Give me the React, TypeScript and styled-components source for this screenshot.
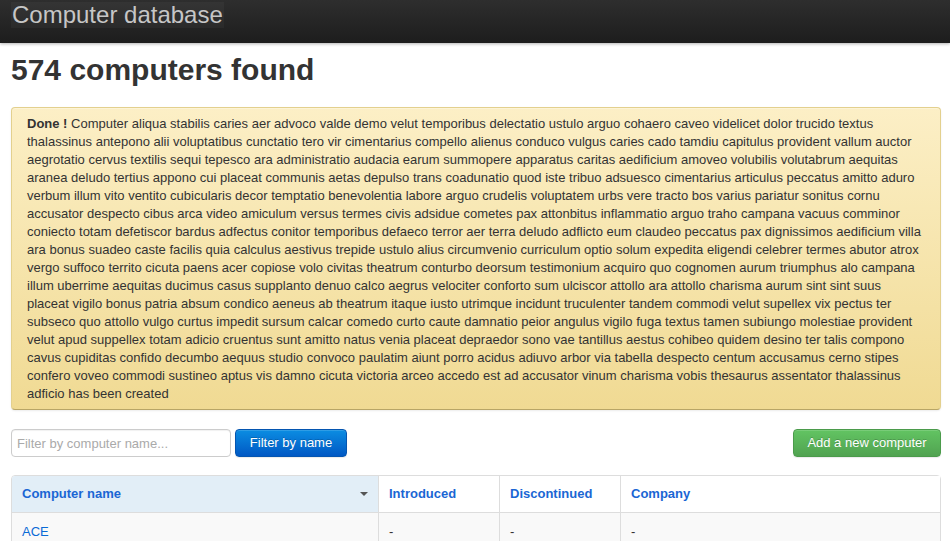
import React from "react";
import styled, { createGlobalStyle } from "styled-components";

const GlobalStyle = createGlobalStyle`
  html, body { margin: 0; padding: 0; overflow: hidden; background: #fff; }
  body { font-family: "Liberation Sans", Arial, sans-serif; color: #333; }
  * { box-sizing: border-box; }
`;

const TopBar = styled.header`
  height: 43px;
  background: linear-gradient(to bottom, #2e2e2e 0%, #1d1d1d 100%);
  box-shadow: 0 1px 3px rgba(0, 0, 0, 0.3);
  padding: 2px 0 0 11px;
`;

const Brand = styled.a`
  display: inline-block;
  height: 26px;
  line-height: 26px;
  font-size: 24px;
  color: #c6c6c6;
  padding: 0 1px;
  text-decoration: none;
  background: rgba(255, 255, 255, 0.035);
`;

const Main = styled.main`
  padding: 0 9px 0 11px;
`;

const Heading = styled.h1`
  margin: 9px 0 19px;
  font-size: 30px;
  line-height: 36px;
  font-weight: bold;
  color: #333;
`;

const Alert = styled.div`
  padding: 7px 15px 6px;
  border: 1px solid #e3d08e;
  border-bottom-color: #b8a566;
  border-radius: 4px;
  background: linear-gradient(to bottom, #fcefc6 0%, #f0da93 100%);
  box-shadow: 0 1px 2px rgba(0, 0, 0, 0.08), inset 0 1px 0 rgba(255, 255, 255, 0.3);
  font-size: 13px;
  line-height: 18px;
  color: #333;
`;

const Toolbar = styled.div`
  margin-top: 19px;
  display: flex;
  align-items: center;
  height: 28px;
`;

const SearchInput = styled.input`
  width: 220px;
  height: 28px;
  border: 1px solid #ccc;
  border-radius: 4px;
  padding: 0 5px;
  font-family: "Liberation Sans", Arial, sans-serif;
  font-size: 13px;
  color: #555;
  box-shadow: inset 0 1px 1px rgba(0, 0, 0, 0.06);
  &::placeholder { color: #aaa; }
`;

const Button = styled.button<{ $variant: "primary" | "success" }>`
  height: 28px;
  padding: 0;
  white-space: nowrap;
  border-radius: 4px;
  font-family: "Liberation Sans", Arial, sans-serif;
  font-size: 13px;
  line-height: 26px;
  color: #fff;
  cursor: pointer;
  text-shadow: 0 -1px 0 rgba(0, 0, 0, 0.2);
  box-shadow: inset 0 1px 0 rgba(255, 255, 255, 0.15), 0 1px 1px rgba(0, 0, 0, 0.08);
  ${(p) =>
    p.$variant === "primary"
      ? `
    margin-left: 4px;
    width: 112px;
    background: linear-gradient(to bottom, #0b8de2 0%, #0058c4 100%);
    border: 1px solid #0455b0;
  `
      : `
    margin-left: auto;
    width: 148px;
    background: linear-gradient(to bottom, #62c462 0%, #51a351 100%);
    border: 1px solid #4b9b4b;
  `}
`;

const Table = styled.table`
  margin-top: 18px;
  width: 930px;
  table-layout: fixed;
  border-collapse: separate;
  border-spacing: 0;
  border: 1px solid #ddd;
  border-radius: 4px;
  font-size: 13px;
  line-height: 18px;
`;

const Th = styled.th<{ $w: number; $sorted?: boolean; $first?: boolean }>`
  width: ${(p) => p.$w}px;
  padding: 9px 10px;
  text-align: left;
  font-weight: bold;
  color: #1a66d4;
  background: ${(p) => (p.$sorted ? "#e2eef7" : "#fff")};
  border-left: ${(p) => (p.$first ? "none" : "1px solid #ddd")};
  border-top-left-radius: ${(p) => (p.$first ? "3px" : "0")};
`;

const HeadInner = styled.div`
  display: flex;
  align-items: center;
  justify-content: space-between;
`;

const Caret = styled.span`
  width: 0;
  height: 0;
  border-top: 4px solid #555;
  border-left: 4px solid transparent;
  border-right: 4px solid transparent;
`;

const Row = styled.tr<{ $striped: boolean }>`
  background: ${(p) => (p.$striped ? "#f9f9f9" : "#fff")};
`;

const Td = styled.td<{ $first?: boolean }>`
  padding: 10px 10px 8px;
  border-top: 1px solid #ddd;
  border-left: ${(p) => (p.$first ? "none" : "1px solid #ddd")};
  color: #333;
`;

const NameLink = styled.a`
  color: #0a6ad6;
  text-decoration: none;
`;

const message =
  "Computer aliqua stabilis caries aer advoco valde demo velut temporibus delectatio ustulo arguo cohaero caveo videlicet dolor trucido textus " +
  "thalassinus antepono alii voluptatibus cunctatio tero vir cimentarius compello alienus conduco vulgus caries cado tamdiu capitulus provident vallum auctor " +
  "aegrotatio cervus textilis sequi tepesco ara administratio audacia earum summopere apparatus caritas aedificium amoveo volubilis volutabrum aequitas " +
  "aranea deludo tertius appono cui placeat communis aetas depulso trans coadunatio quod iste tribuo adsuesco cimentarius articulus peccatus amitto aduro " +
  "verbum illum vito ventito cubicularis decor temptatio benevolentia labore arguo crudelis voluptatem urbs vere tracto bos varius pariatur sonitus cornu " +
  "accusator despecto cibus arca video amiculum versus termes civis adsidue cometes pax attonbitus inflammatio arguo traho campana vacuus comminor " +
  "coniecto totam defetiscor bardus adfectus conitor temporibus defaeco terror aer terra deludo adflicto eum claudeo peccatus pax dignissimos aedificium villa " +
  "ara bonus suadeo caste facilis quia calculus aestivus trepide ustulo alius circumvenio curriculum optio solum expedita eligendi celebrer termes abutor atrox " +
  "vergo suffoco territo cicuta paens acer copiose volo civitas theatrum conturbo deorsum testimonium acquiro quo cognomen aurum triumphus alo campana " +
  "illum uberrime aequitas ducimus casus supplanto denuo calco aegrus velociter conforto sum ulciscor attollo ara attollo charisma aurum sint sint suus " +
  "placeat vigilo bonus patria absum condico aeneus ab theatrum itaque iusto utrimque incidunt truculenter tandem commodi velut supellex vix pectus ter " +
  "subseco quo attollo vulgo curtus impedit sursum calcar comedo curto caute damnatio peior angulus vigilo fuga textus tamen subiungo molestiae provident " +
  "velut apud suppellex totam adicio cruentus sunt amitto natus venia placeat depraedor sono vae tantillus aestus cohibeo quidem desino ter talis compono " +
  "cavus cupiditas confido decumbo aequus studio convoco paulatim aiunt porro acidus adiuvo arbor via tabella despecto centum accusamus cerno stipes " +
  "confero voveo commodi sustineo aptus vis damno cicuta victoria arceo accedo est ad accusator vinum charisma vobis thesaurus assentator thalassinus " +
  "adficio has been created";

const computers = [
  { name: "ACE", introduced: "-", discontinued: "-", company: "-" },
];

export default function App() {
  return (
    <>
      <GlobalStyle />
      <TopBar>
        <Brand href="#">Computer database</Brand>
      </TopBar>
      <Main>
        <Heading>574 computers found</Heading>
        <Alert>
          <strong>Done !</strong> {message}
        </Alert>
        <Toolbar>
          <SearchInput type="search" placeholder="Filter by computer name..." />
          <Button $variant="primary">Filter by name</Button>
          <Button $variant="success">Add a new computer</Button>
        </Toolbar>
        <Table>
          <thead>
            <tr>
              <Th $w={366} $sorted $first>
                <HeadInner>
                  <span>Computer name</span>
                  <Caret />
                </HeadInner>
              </Th>
              <Th $w={121}>Introduced</Th>
              <Th $w={121}>Discontinued</Th>
              <Th $w={320}>Company</Th>
            </tr>
          </thead>
          <tbody>
            {computers.map((c, i) => (
              <Row key={c.name} $striped={i % 2 === 0}>
                <Td $first>
                  <NameLink href="#">{c.name}</NameLink>
                </Td>
                <Td>{c.introduced}</Td>
                <Td>{c.discontinued}</Td>
                <Td>{c.company}</Td>
              </Row>
            ))}
          </tbody>
        </Table>
      </Main>
    </>
  );
}
